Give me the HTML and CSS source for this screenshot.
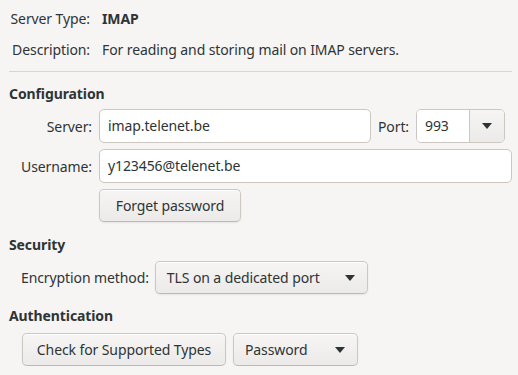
FILE: index.html
```html
<!DOCTYPE html>
<html lang="en">
<head>
    <meta charset="UTF-8">
    <title>Server Settings</title>
    <link rel="stylesheet" href="styles.css">
</head>
<body>
    <div class="info">
        <span class="info-label">Server Type:</span>
        <span class="info-value bold">IMAP</span>
        <span class="info-label">Description:</span>
        <span class="info-value">For reading and storing mail on IMAP servers.</span>
    </div>
    <div class="separator"></div>

    <div class="heading">Configuration</div>
    <div class="config">
        <label class="row-label" for="server">Server:</label>
        <div class="entry" id="server">imap.telenet.be</div>
        <label class="port-label">Port:</label>
        <div class="port-combo">
            <div class="port-value">993</div>
            <div class="port-button"><span class="arrow"></span></div>
        </div>
        <span></span>

        <label class="row-label" for="username">Username:</label>
        <div class="entry wide" id="username">y123456@telenet.be</div>

        <span></span>
        <div class="button forget">Forget password</div>
    </div>

    <div class="heading security">Security</div>
    <div class="row">
        <span class="row-text">Encryption method:</span>
        <div class="button combo tls">TLS on a dedicated port <span class="arrow"></span></div>
    </div>

    <div class="heading auth">Authentication</div>
    <div class="row buttons">
        <div class="button check">Check for Supported Types</div>
        <div class="button combo password">Password <span class="arrow"></span></div>
    </div>
</body>
</html>
```

FILE: styles.css
```css
body {
    margin: 0;
    padding: 0 6px 0 9px;
    background-color: #f6f5f4;
    color: #2e3436;
    font-family: "Noto Sans", sans-serif;
    font-size: 14px;
    letter-spacing: -0.1px;
}

.bold {
    font-weight: bold;
}

.info {
    display: grid;
    grid-template-columns: 81px auto;
    column-gap: 12px;
    padding-top: 3px;
}
.info-label {
    text-align: right;
    line-height: 31px;
}
.info-value {
    line-height: 31px;
}

.separator {
    height: 1px;
    background-color: #d8d4d0;
    margin-top: 6px;
}

.heading {
    font-weight: bold;
    line-height: 20px;
    margin-top: 12px;
}
.heading.security {
    margin-top: 13px;
}

.config {
    display: grid;
    grid-template-columns: 71px 1fr auto 89px 0px;
    column-gap: 7px;
    row-gap: 6px;
    margin-top: 5px;
    padding-left: 12px;
}
.row-label {
    text-align: right;
    align-self: center;
}
.port-label {
    align-self: center;
}

.entry {
    height: 34px;
    box-sizing: border-box;
    background-color: white;
    border: 1px solid #cdc7c2;
    border-radius: 5px;
    padding: 0 8px;
    line-height: 32px;
}
.entry.wide {
    grid-column: 2 / 6;
}

.port-combo {
    display: flex;
    height: 34px;
    box-sizing: border-box;
    border: 1px solid #cdc7c2;
    border-radius: 5px;
    overflow: hidden;
}
.port-value {
    flex: 1;
    background-color: white;
    padding-left: 8px;
    line-height: 32px;
    border-right: 1px solid #cdc7c2;
}
.port-button {
    width: 34px;
    display: flex;
    align-items: center;
    justify-content: center;
    background-image: linear-gradient(to top, #edebe9 2px, #f6f5f4);
}

.button {
    height: 33px;
    box-sizing: border-box;
    border: 1px solid #cdc7c2;
    border-bottom-color: #bfb8b1;
    border-radius: 5px;
    background-image: linear-gradient(to top, #edebe9 2px, #f6f5f4);
    box-shadow: inset 0 1px white, 0 1px 2px rgba(0, 0, 0, 0.07);
    display: flex;
    align-items: center;
    justify-content: center;
}
.forget {
    width: 142px;
}

.combo {
    justify-content: space-between;
    padding: 0 12px 0 11px;
}

.arrow {
    width: 0;
    height: 0;
    border-left: 5px solid transparent;
    border-right: 5px solid transparent;
    border-top: 6px solid #2e3436;
}

.row {
    display: flex;
    align-items: center;
    gap: 6px;
    margin-top: 6px;
    padding-left: 12px;
}
.tls {
    width: 213px;
}

.heading.auth {
    margin-top: 12px;
}
.buttons {
    margin-top: 7px;
    padding-left: 13px;
    gap: 7px;
}
.check {
    width: 204px;
}
.password {
    width: 125px;
}
```
